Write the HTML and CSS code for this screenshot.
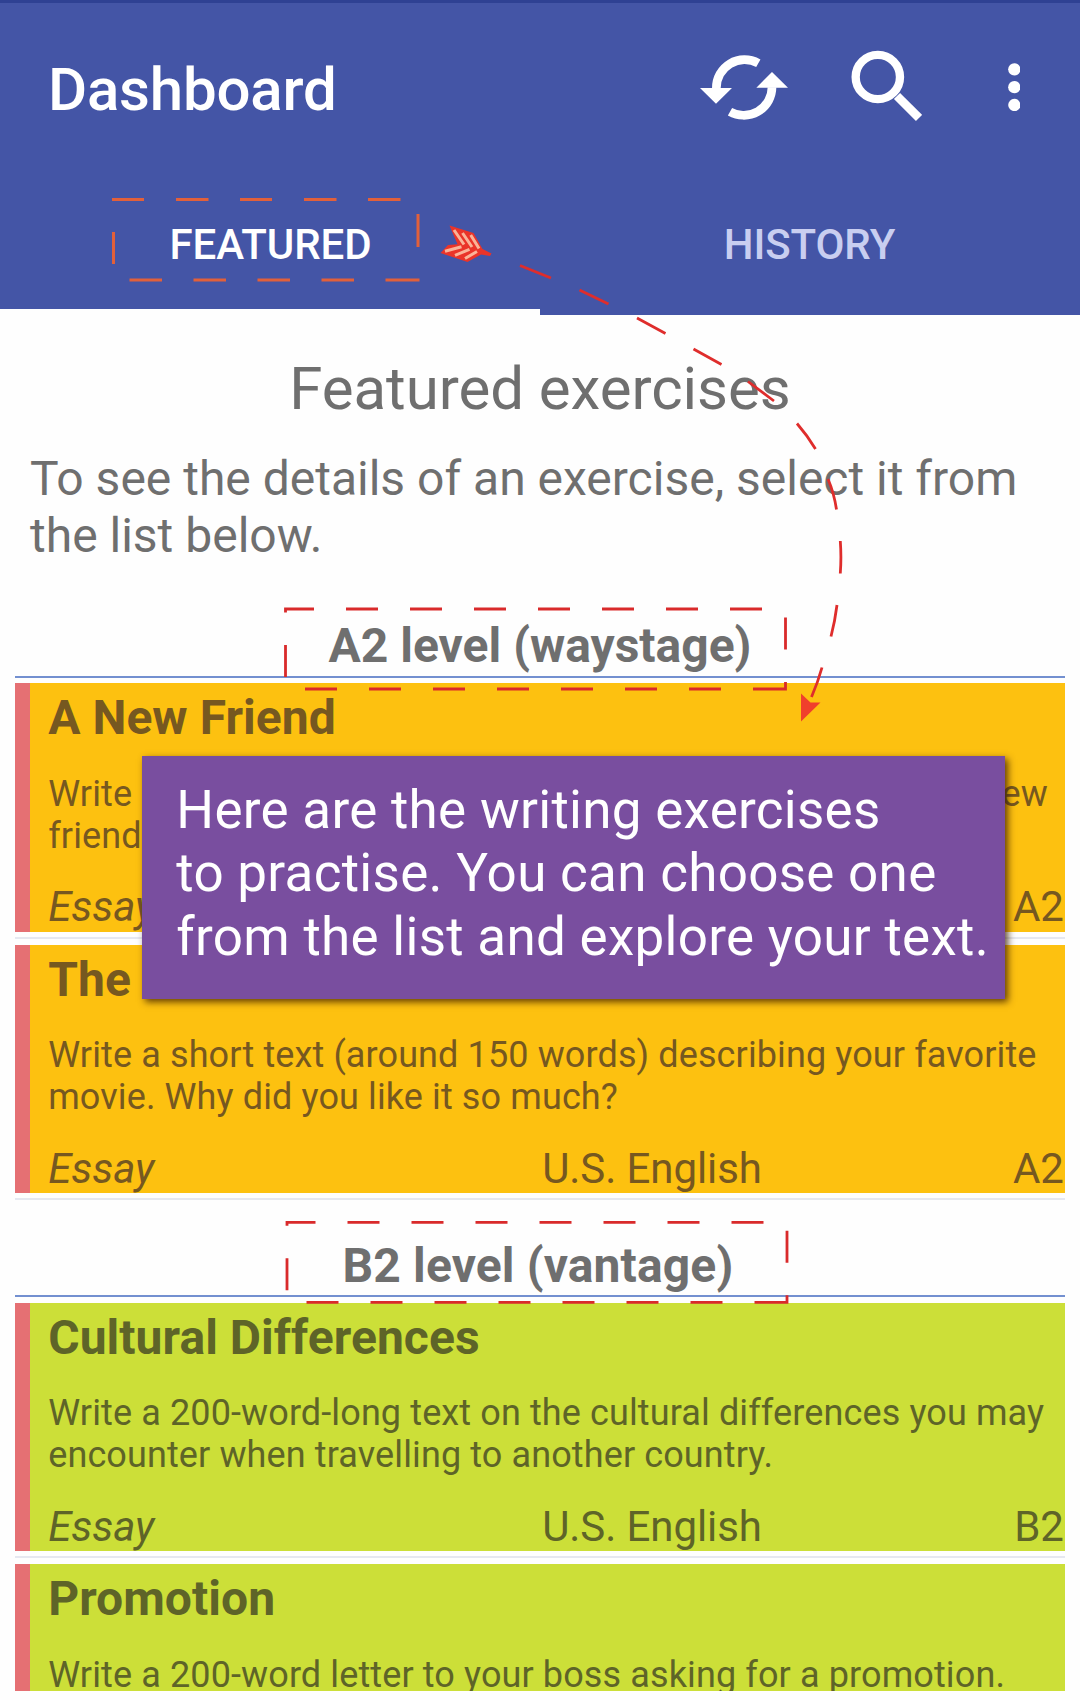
FILE: index.html
```html
<!DOCTYPE html>
<html lang="en">
<head>
<meta charset="utf-8">
<title>Dashboard</title>
<link rel="stylesheet" href="styles.css">
</head>
<body>
<div class="screen">
  <header class="appbar">
    <div class="toolbar">
      <h1 class="appbar-title">Dashboard</h1>
      <div class="actions">
        <svg class="icon-refresh" viewBox="120 160 265 202">
          <path d="M295 188A84.500 84.500 0 0 0 169 263" fill="none" stroke="#fff" stroke-width="26"/>
          <path d="M210 333A84.500 84.500 0 0 0 336 260" fill="none" stroke="#fff" stroke-width="26"/>
          <path d="M120 262H216L168 309ZM289 261H384L336 214Z" fill="#fff"/>
        </svg>
        <svg class="icon-search" viewBox="574 150 214 215">
          <circle cx="654.500" cy="231" r="66.500" fill="none" stroke="#fff" stroke-width="25"/>
          <path d="M712 288L778 354" fill="none" stroke="#fff" stroke-width="26"/>
        </svg>
        <svg class="icon-more" viewBox="1043 189 38 145">
          <circle cx="1062" cy="208" r="18.500" fill="#fff"/>
          <circle cx="1062" cy="261.500" r="18.500" fill="#fff"/>
          <circle cx="1062" cy="315" r="18.500" fill="#fff"/>
        </svg>
      </div>
    </div>
    <nav class="tabs">
      <div class="tab tab-active">FEATURED</div>
      <div class="tab">HISTORY</div>
    </nav>
  </header>

  <main class="content">
    <h2 class="heading">Featured exercises</h2>
    <p class="intro">To see the details of an exercise, select it from the list below.</p>

    <section class="level">
      <h3 class="level-title">A2 level (waystage)</h3>
      <article class="card amber">
        <h4 class="card-title">A New Friend</h4>
        <div class="card-text">
          <div class="split"><span>Write</span><span>new</span></div>
          <div>friend</div>
        </div>
        <div class="meta"><em>Essay</em><span></span><span>A2</span></div>
      </article>
      <div class="divider"></div>
      <article class="card amber">
        <h4 class="card-title">The</h4>
        <p class="card-text">Write a short text (around 150 words) describing your favorite movie. Why did you like it so much?</p>
        <div class="meta"><em>Essay</em><span>U.S. English</span><span>A2</span></div>
      </article>
      <div class="divider"></div>
    </section>

    <section class="level">
      <h3 class="level-title level-title-next">B2 level (vantage)</h3>
      <article class="card lime">
        <h4 class="card-title">Cultural Differences</h4>
        <p class="card-text">Write a 200-word-long text on the cultural differences you may encounter when travelling to another country.</p>
        <div class="meta"><em>Essay</em><span>U.S. English</span><span>B2</span></div>
      </article>
      <div class="divider"></div>
      <article class="card lime card-cut">
        <h4 class="card-title">Promotion</h4>
        <p class="card-text">Write a 200-word letter to your boss asking for a promotion.</p>
      </article>
    </section>
  </main>

  <svg class="annotations" viewBox="0 0 1080 1700" fill="none">
    <!-- frame round the active tab -->
    <path class="frame-orange" d="M112 199.500h32M176 199.500h32.500M240 199.500h32M304 199.500h32.500M368 199.500h32.500M418 214v33M113.500 232v32M129.500 280h32.500M193.500 280h32.500M257.500 280h32.500M321.500 280h32.500M385.500 280h34"/>
    <!-- frames round the level titles -->
    <path id="frame" class="frame-red" d="M285.500 612.500V609H314M346 609h32M410 609h32M474 609h32M538 609h32M602 609h32M666 609h32M730 609h32M785.500 617.500v32M785.500 682V689H753M721 689h-32M657 689h-32M593 689h-32M529 689h-32M465 689h-32M401 689h-32M337 689h-32M285.500 677v-32"/>
    <use href="#frame" x="1.500" y="613.300"/>
    <!-- pointer from the tab to the list -->
    <path class="pointer" d="M520 265.500L551 278M579.500 290L608.500 304M637 318L665.500 333.500M693.500 349L721.500 364.500M748 381.500L774 401M797 423.500Q807 435 815.500 449M828 479Q834 493 836.500 509.500M840.300 541Q841.500 557 840.300 573.500M837 605Q835 621 831 636.500M822 667.500Q818 682 811.500 697"/>
    <path d="M801 693.500L810.500 702.500L820.500 702.500L801 721.500Z" fill="#f0402c"/>
    <!-- arrow feathers -->
    <path d="M449.500 225.500L473.500 233L482.500 249L491.500 253.500L490 256L481 254.500L467.500 262L440.500 253L448 245L457.500 244.300Z" fill="#ea3429"/>
    <path d="M454 230L464 244.500M462.500 233L472 247M470.700 235L479 248.500M461.500 246.700L445 251.300M469.500 249.300L455 255.300M477 251.500L465 258.500" stroke="#fab398" stroke-width="3"/>
  </svg>

  <aside class="tip">Here are the writing exercises<br>to practise. You can choose one<br>from the list and explore your text.</aside>
</div>
</body>
</html>
```

FILE: styles.css
```css
* { box-sizing: border-box; }
body {
  margin: 0;
  background: #fefefe;
  font-family: Roboto, "Liberation Sans", sans-serif;
  color: #6f6f6f;
}
h1, h2, h3, h4, p { margin: 0; }

.screen {
  position: relative;
  width: 1080px;
  height: 1700px;
  overflow: hidden;
}

.appbar {
  display: flex;
  flex-direction: column;
  justify-content: space-between;
  height: 315px;
  background: #4455a6;
  border-top: 3px solid #2f4193;
  color: #fff;
}
.toolbar {
  display: flex;
  justify-content: space-between;
  padding: 0 59.7px 0 48px;
}
.appbar-title {
  margin-top: 56.5px;
  font-size: 60px;
  line-height: 60px;
  font-weight: 500;
  letter-spacing: -0.2px;
}
.actions { display: flex; }
.actions svg { display: block; }
.icon-refresh { width: 88.333px; height: 67.333px; margin-top: 50.8px; }
.icon-search { width: 71.333px; height: 71.667px; margin: 47.3px 0 0 63px; }
.icon-more { width: 12.667px; height: 48.333px; margin: 60px 0 0 85.3px; }

.tabs {
  display: grid;
  grid-template-columns: 1fr 1fr;
  height: 101px;
}
.tab {
  padding: 6px 1px 0 0;
  text-align: center;
  font-size: 42px;
  line-height: 50px;
  font-weight: 500;
  letter-spacing: -0.1px;
  color: #c9cef0;
}
.tab-active {
  padding: 6px 0 0 1px;
  color: #fff;
  border-bottom: 6px solid #fefefe;
}

.content { padding-top: 38.5px; }
.heading {
  font-size: 60px;
  line-height: 70px;
  font-weight: 400;
  text-align: center;
  letter-spacing: -0.05px;
}
.intro {
  width: 1030px;
  margin-top: 26.5px;
  padding-left: 30px;
  font-size: 48px;
  line-height: 57px;
}

.level { padding: 0 15.2px; }
.level-title {
  margin-top: 54px;
  height: 59.5px;
  font-size: 48px;
  line-height: 56px;
  font-weight: 700;
  text-align: center;
  border-bottom: 2px solid #7390d0;
}
.level-title-next {
  margin-top: 37.2px;
  padding-right: 4px;
  letter-spacing: 0.13px;
}

.card {
  height: 248.5px;
  padding: 6.7px 1px 0 18px;
  border-left: 15px solid #e57073;
  overflow: hidden;
}
.level-title + .card { margin-top: 5.9px; }
.amber { background: #fdc110; color: #765820; }
.lime { background: #ccdf38; color: #5e6428; }
.card-cut { height: 126.5px; }
.card-title {
  font-size: 48px;
  line-height: 56px;
  font-weight: 700;
  letter-spacing: 0.05px;
}
.card-text {
  margin-top: 26.5px;
  font-size: 36px;
  line-height: 42px;
  letter-spacing: 0.117px;
}
.split {
  display: flex;
  justify-content: space-between;
  padding-right: 16px;
}
.meta {
  display: grid;
  grid-template-columns: 494px 1fr auto;
  margin-top: 25.5px;
  font-size: 42px;
  line-height: 49px;
  letter-spacing: -0.08px;
}
.divider {
  height: 2px;
  margin: 5px 0 6px;
  background: #e6e8f0;
}

.annotations {
  position: absolute;
  top: 0;
  left: 0;
  width: 1080px;
  height: 1700px;
}
.frame-orange { stroke: #e2603a; stroke-width: 3; }
.frame-red { stroke: #d92a2b; stroke-width: 2.8; }
.pointer { stroke: #df2d2c; stroke-width: 2.8; }

.tip {
  position: absolute;
  left: 142.3px;
  top: 755.7px;
  width: 862.5px;
  height: 243px;
  padding: 23.2px 0 0 34px;
  background: #794e9f;
  box-shadow: 3px 3px 7px rgba(60, 30, 0, 0.8);
  color: #fff;
  font-size: 53px;
  line-height: 63.5px;
  letter-spacing: 0.28px;
  white-space: nowrap;
}
```
